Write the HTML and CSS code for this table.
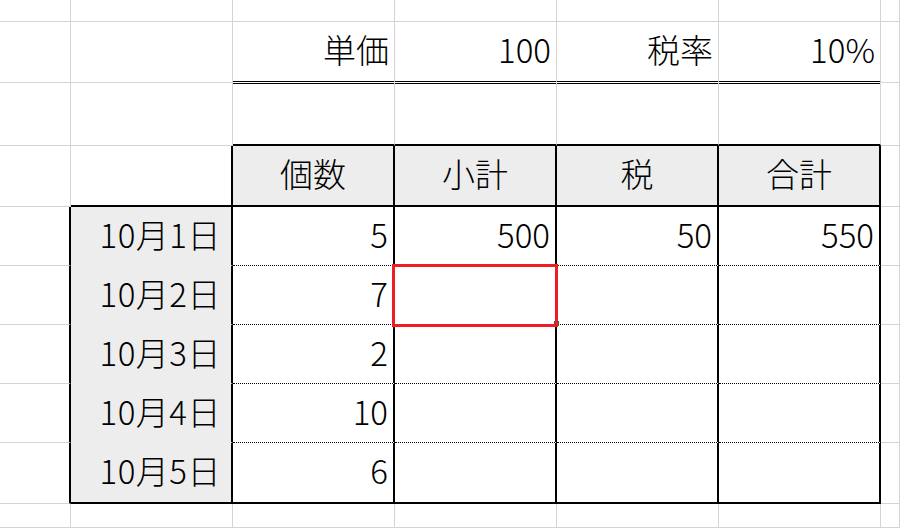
FILE: index.html
```html
<!DOCTYPE html>
<html lang="ja">
<head>
<meta charset="utf-8">
<link rel="stylesheet" href="styles.css">
</head>
<body>
<div class="sheet">
  <!-- row 0 -->
  <div class="c"></div><div class="c"></div><div class="c"></div><div class="c"></div><div class="c"></div><div class="c"></div><div class="c"></div>
  <!-- row 1 -->
  <div class="c"></div><div class="c"></div>
  <div class="c dbl">単価</div><div class="c dbl">100</div><div class="c dbl">税率</div><div class="c dbl">10%</div>
  <div class="c"></div>
  <!-- row 2 -->
  <div class="c"></div><div class="c"></div>
  <div class="c bb2"></div><div class="c bb2"></div><div class="c bb2"></div><div class="c bb2"></div>
  <div class="c"></div>
  <!-- row 3 header -->
  <div class="c"></div><div class="c br2 bb2"></div>
  <div class="c hd">個数</div><div class="c hd">小計</div><div class="c hd">税</div><div class="c hd">合計</div>
  <div class="c"></div>
  <!-- row 4 -->
  <div class="c br2"></div><div class="c dt">10月1日</div>
  <div class="c in">5</div><div class="c in">500</div><div class="c in">50</div><div class="c in">550</div>
  <div class="c"></div>
  <!-- row 5 -->
  <div class="c br2"></div><div class="c dt">10月2日</div>
  <div class="c in">7</div><div class="c in sel-host"><span class="handle"></span><span class="sel"></span></div><div class="c in"></div><div class="c in"></div>
  <div class="c"></div>
  <!-- row 6 -->
  <div class="c br2"></div><div class="c dt">10月3日</div>
  <div class="c in">2</div><div class="c in"></div><div class="c in"></div><div class="c in"></div>
  <div class="c"></div>
  <!-- row 7 -->
  <div class="c br2"></div><div class="c dt">10月4日</div>
  <div class="c in">10</div><div class="c in"></div><div class="c in"></div><div class="c in"></div>
  <div class="c"></div>
  <!-- row 8 -->
  <div class="c br2"></div><div class="c dt last">10月5日</div>
  <div class="c in last">6</div><div class="c in last"></div><div class="c in last"></div><div class="c in last"></div>
  <div class="c"></div>
  <!-- row 9 -->
  <div class="c"></div><div class="c"></div><div class="c"></div><div class="c"></div><div class="c"></div><div class="c"></div><div class="c"></div>
</div>
</body>
</html>
```
FILE: styles.css
```css
html, body {
  margin: 0;
  padding: 0;
  background: #ffffff;
  overflow: hidden;
}

.sheet {
  width: 900px;
  height: 528px;
  display: grid;
  grid-template-columns: 71px 162px 162px 162px 162px 162px 19px;
  grid-template-rows: 22px 61px 63px 61px 59px 59px 59px 59px 61px 24px;
  font-family: "Noto Sans CJK JP", "Noto Sans", sans-serif;
  font-size: 33px;
  font-weight: 300;
  line-height: 1;
  color: #000;
  overflow: hidden;
}

.c {
  box-sizing: border-box;
  border-right: 1px solid #d4d4d4;
  border-bottom: 1px solid #d4d4d4;
  display: flex;
  align-items: center;
  justify-content: flex-end;
  padding: 0 5px 4px 0;
  min-width: 0;
  white-space: nowrap;
}

.dbl {
  border-bottom: 3px double #000;
  margin-bottom: -1px;
}

.bb2 {
  border-bottom: 2px solid #000;
}

.br2 {
  border-right: 2px solid #000;
}

.hd {
  background: #ededed;
  justify-content: center;
  border-right: 2px solid #000;
  border-bottom: 2px solid #000;
  padding: 0 0 4px 0;
}

.dt {
  background: #ededed;
  border-right: 2px solid #000;
  border-bottom: 1px solid #ededed;
  padding-right: 10px;
  letter-spacing: 0.5px;
}

.in {
  border-right: 2px solid #000;
  border-bottom: 1px dotted #000;
}

.last {
  border-bottom: 2px solid #000;
}

.sel-host {
  position: relative;
}

.sel {
  position: absolute;
  left: -3px;
  top: -2px;
  width: 166px;
  height: 63px;
  box-sizing: border-box;
  border: 3px solid #ee1c25;
  z-index: 2;
}

.handle {
  position: absolute;
  left: 159px;
  top: 55px;
  width: 5px;
  height: 5px;
  background: #217346;
  z-index: 1;
}
```
